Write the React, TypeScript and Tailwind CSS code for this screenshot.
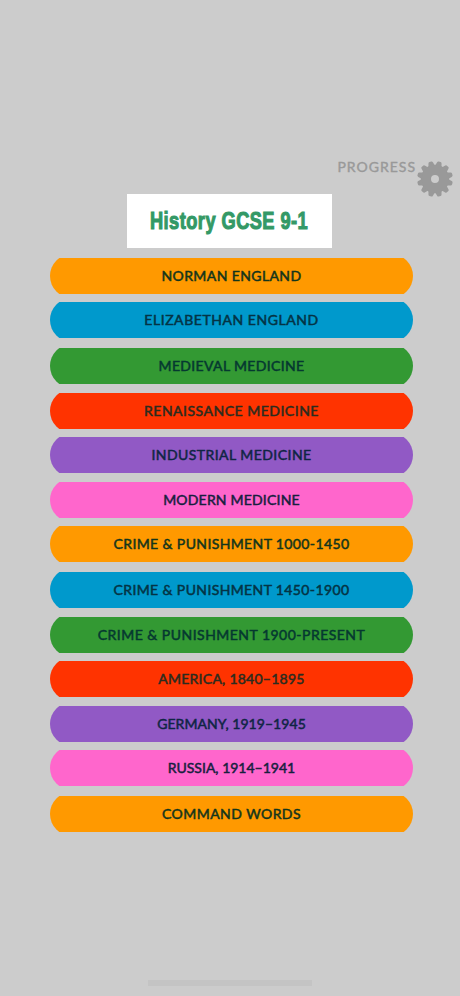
import { clsx } from "clsx";

type Topic = {
  label: string;
  color: string;
  text: string;
  tracking: string;
  gap?: string;
};

const topics: Topic[] = [
  { label: "NORMAN ENGLAND", color: "bg-[#ff9900]", text: "text-[#12351c]", tracking: "tracking-[0.4px]" },
  { label: "ELIZABETHAN ENGLAND", color: "bg-[#0099cc]", text: "text-[#043344]", tracking: "tracking-[0.55px]", gap: "mt-[8.5px]" },
  { label: "MEDIEVAL MEDICINE", color: "bg-[#339933]", text: "text-[#053830]", tracking: "tracking-[0.35px]", gap: "mt-[10px]" },
  { label: "RENAISSANCE MEDICINE", color: "bg-[#ff3300]", text: "text-[#2a2c1f]", tracking: "tracking-[0.5px]" },
  { label: "INDUSTRIAL MEDICINE", color: "bg-[#9159c5]", text: "text-[#0f2544]", tracking: "tracking-[0.45px]" },
  { label: "MODERN MEDICINE", color: "bg-[#ff66cc]", text: "text-[#17203f]", tracking: "tracking-[0.2px]" },
  { label: "CRIME & PUNISHMENT 1000-1450", color: "bg-[#ff9900]", text: "text-[#12351c]", tracking: "tracking-[0.38px]" },
  { label: "CRIME & PUNISHMENT 1450-1900", color: "bg-[#0099cc]", text: "text-[#043344]", tracking: "tracking-[0.38px]", gap: "mt-[10px]" },
  { label: "CRIME & PUNISHMENT 1900-PRESENT", color: "bg-[#339933]", text: "text-[#053830]", tracking: "tracking-[0.48px]" },
  { label: "AMERICA, 1840–1895", color: "bg-[#ff3300]", text: "text-[#2a2c1f]", tracking: "tracking-[0.25px]" },
  { label: "GERMANY, 1919–1945", color: "bg-[#9159c5]", text: "text-[#0f2544]", tracking: "tracking-[0.05px]" },
  { label: "RUSSIA, 1914–1941", color: "bg-[#ff66cc]", text: "text-[#17203f]", tracking: "tracking-[0px]" },
  { label: "COMMAND WORDS", color: "bg-[#ff9900]", text: "text-[#12351c]", tracking: "tracking-[0.45px]", gap: "mt-[10px]" },
];

const teeth = Array.from({ length: 12 }, (_, i) => 15 + i * 30);

function GearIcon() {
  return (
    <svg viewBox="-18 -18 36 36" className="w-9 h-9 fill-[#999999]">
      <path
        fillRule="evenodd"
        d="M0-14.2A14.2 14.2 0 1 1 0 14.2A14.2 14.2 0 1 1 0-14.2ZM0-4A4 4 0 1 0 0 4A4 4 0 1 0 0-4Z"
      />
      {teeth.map(angle => (
        <path key={angle} d="M-3.3-13L-2.3-16.7Q-2-17.9-1-17.9H1Q2-17.9 2.3-16.7L3.3-13Z" transform={`rotate(${angle})`} />
      ))}
    </svg>
  );
}

function TopicButton({ topic }: { topic: Topic }) {
  return (
    <button className={clsx("block w-full h-9 overflow-hidden", topic.gap ?? "mt-[8.5px]")}>
      {/* Taller than the button, so the round ends get cut off top and bottom */}
      <span className={clsx("flex items-center justify-center h-11 -my-1 rounded-full", topic.color)}>
        <span className={clsx("text-[14px] leading-none font-normal whitespace-nowrap [-webkit-text-stroke:0.5px_currentColor]", topic.text, topic.tracking)}>
          {topic.label}
        </span>
      </span>
    </button>
  );
}

export default function App() {
  return (
    <div className="w-[460px] h-[996px] bg-[#cccccc] flex flex-col overflow-hidden font-['Lato',sans-serif]">
      <header className="flex justify-end items-start pt-[161px] pr-[7px]">
        <span className="text-[14px] leading-3 mr-px tracking-[1px] [-webkit-text-stroke:0.4px_currentColor] text-[#999999]">PROGRESS</span>
        <button>
          <GearIcon />
        </button>
      </header>

      <h1 className="w-[205px] h-[54px] -mt-[3px] pt-0.5 ml-[127px] shrink-0 bg-white flex items-center justify-center">
        <span className="font-['Liberation_Sans',sans-serif] font-bold text-[23.5px] leading-none tracking-[0.6px] text-[#339966] whitespace-nowrap scale-x-[0.775] [-webkit-text-stroke:1.1px_currentColor]">
          History GCSE 9-1
        </span>
      </h1>

      <main className="ml-[50px] mt-[1px] w-[363px]">
        {topics.map(topic => (
          <TopicButton key={topic.label} topic={topic} />
        ))}
      </main>

      <div className="mt-auto mb-2.5 ml-[148px] w-[164px] h-1.5 shrink-0 bg-[#c4c4c4]" />
    </div>
  );
}
